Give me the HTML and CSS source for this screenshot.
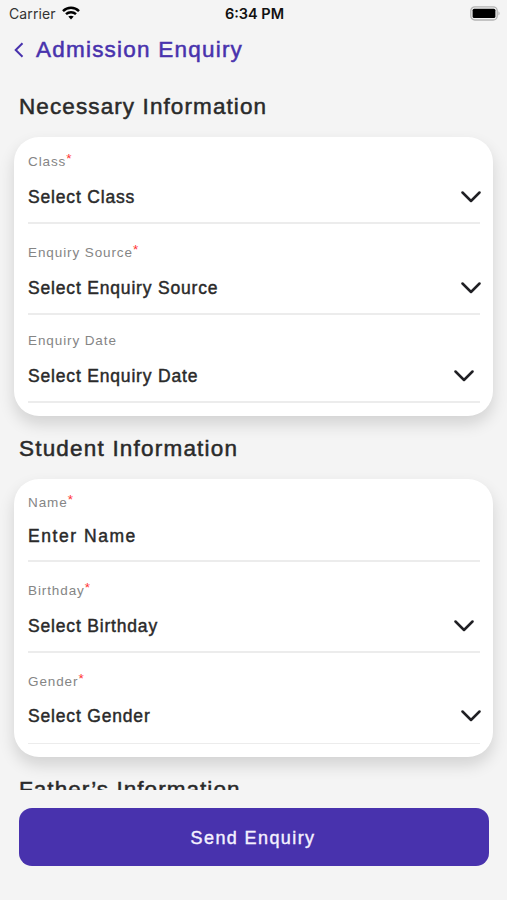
FILE: index.html
```html
<!DOCTYPE html>
<html lang="en">
<head>
<meta charset="utf-8">
<title>Admission Enquiry</title>
<link rel="stylesheet" href="styles.css">
</head>
<body>
<div class="status">
  <div class="carrier"><span>Carrier</span>
    <svg width="18" height="14" viewBox="0 0 18 14" fill="none" stroke="#000" stroke-width="2.5"><path d="M1 5.100C5.500.7 12.500.7 17 5.100M4 8.200C6.800 5.600 11.200 5.600 14 8.200"/><path d="M9 13.400 6.300 10.600C7.900 9.300 10.100 9.300 11.700 10.600Z" fill="#000" stroke="none"/></svg>
  </div>
  <div class="time">6:34 PM</div>
  <svg class="battery" width="31" height="15" viewBox="0 0 31 15"><rect x=".8" y=".8" width="26.400" height="13.200" rx="4" fill="#f3f3f3" stroke="#b3b3b3" stroke-width="1.300"/><rect x="2.600" y="2.700" width="22.800" height="9.400" rx="1.500" fill="#000"/><path d="M28.500 5.200Q30.600 7.400 28.500 9.600Z" fill="#aaa"/></svg>
</div>
<header class="header">
  <svg width="10" height="16" viewBox="0 0 10 16" fill="none" stroke="#4832ad" stroke-width="2"><path d="M8.500 1.300 1.700 8l6.800 6.700"/></svg>
  <h1>Admission Enquiry</h1>
</header>
<main class="content">
  <h2>Necessary Information</h2>
  <section class="card">
    <div class="field first"><label>Class<sup>*</sup></label><div class="value"><span>Select Class</span><svg class="chev" viewBox="0 0 20 12"><path d="M1.500 1.500 10 10l8.500-8.500"/></svg></div></div>
    <div class="field"><label>Enquiry Source<sup>*</sup></label><div class="value"><span>Select Enquiry Source</span><svg class="chev" viewBox="0 0 20 12"><path d="M1.500 1.500 10 10l8.500-8.500"/></svg></div></div>
    <div class="field optional"><label>Enquiry Date</label><div class="value inset"><span>Select Enquiry Date</span><svg class="chev" viewBox="0 0 20 12"><path d="M1.500 1.500 10 10l8.500-8.500"/></svg></div></div>
  </section>
  <h2 class="student">Student Information</h2>
  <section class="card">
    <div class="field input"><label>Name<sup>*</sup></label><div class="value"><span>Enter Name</span></div></div>
    <div class="field"><label>Birthday<sup>*</sup></label><div class="value inset"><span>Select Birthday</span><svg class="chev" viewBox="0 0 20 12"><path d="M1.500 1.500 10 10l8.500-8.500"/></svg></div></div>
    <div class="field last"><label>Gender<sup>*</sup></label><div class="value"><span>Select Gender</span><svg class="chev" viewBox="0 0 20 12"><path d="M1.500 1.500 10 10l8.500-8.500"/></svg></div></div>
  </section>
  <h2 class="next">Father’s Information</h2>
</main>
<footer><button>Send Enquiry</button></footer>
</body>
</html>
```

FILE: styles.css
```css
* { box-sizing: border-box; }
body {
  margin: 0;
  height: 900px;
  display: flex;
  flex-direction: column;
  overflow: hidden;
  background: #f4f4f4;
  color: #2a2a2a;
  font-family: "Liberation Sans", Arial, sans-serif;
}
.status {
  display: grid;
  grid-template-columns: 1fr auto 1fr;
  align-items: center;
  height: 27px;
  padding: 0 6px 0 9px;
  color: #111;
  font: 14px Inter, sans-serif;
}
.carrier { display: flex; align-items: center; gap: 6px; }
.carrier span { color: #333; letter-spacing: .1px; }
.carrier svg { margin-top: -2px; }
.time { margin-left: -1px; font-weight: 600; font-size: 14.5px; }
.battery { justify-self: end; margin-top: -1px; }
.header {
  flex: none;
  display: flex;
  align-items: center;
  gap: 12px;
  height: 44px;
  padding: 2px 0 0 14px;
  color: #4832ad;
}
h1, h2 {
  margin: 0;
  font-size: 22.5px;
  line-height: 28px;
  font-weight: 400;
  letter-spacing: 1.22px;
  -webkit-text-stroke: .5px currentColor;
  white-space: nowrap;
}
h2 { padding-left: 5px; letter-spacing: 1.1px; }
h2.student { letter-spacing: 1.2px; }
h2.next { letter-spacing: 1.05px; }
.content {
  flex: none;
  height: 719px;
  overflow: hidden;
  padding: 22px 14px 0;
}
.card {
  margin: 16px 0 19px;
  padding: 0 13px 0 14px;
  height: 279px;
  background: #fff;
  border-radius: 25px;
  box-shadow: 0 8px 16px rgba(0, 0, 0, .14);
}
.student + .card { height: 278px; }
.field {
  display: flex;
  flex-direction: column;
  justify-content: flex-end;
  height: 91px;
  border-bottom: 2px solid #ececec;
}
.field.first { height: 87px; }
.field.optional { height: 88px; }
.field.input { height: 83px; }
.field.last { border-bottom-width: 1px; }
.field.last .value { height: 52px; padding-bottom: 2px; }
label {
  height: 18px;
  line-height: 17px;
  font-size: 13.5px;
  letter-spacing: .9px;
  color: #858585;
}
sup {
  font-size: 13.5px;
  line-height: 0;
  vertical-align: 3px;
  letter-spacing: 0;
  color: #f33;
}
.value {
  display: flex;
  align-items: center;
  justify-content: space-between;
  height: 51px;
  font-size: 17.5px;
  letter-spacing: .82px;
  -webkit-text-stroke: .45px currentColor;
}
.value span { padding-top: 1px; }
.inset { padding-right: 7px; }
.input .value { height: 48px; letter-spacing: 1.55px; }
.chev { width: 20px; height: 12px; margin-right: -1px; fill: none; stroke: #202024; stroke-width: 2.5; stroke-linecap: round; stroke-linejoin: round; }
footer { padding: 18px 18px 0 19px; }
button {
  display: block;
  width: 100%;
  height: 58px;
  padding: 2px 2px 0 0;
  border: 0;
  border-radius: 13px;
  background: #4832ad;
  color: #f5f1ff;
  font: 18px "Liberation Sans", Arial, sans-serif;
  letter-spacing: 1.4px;
  -webkit-text-stroke: .4px currentColor;
}
```
